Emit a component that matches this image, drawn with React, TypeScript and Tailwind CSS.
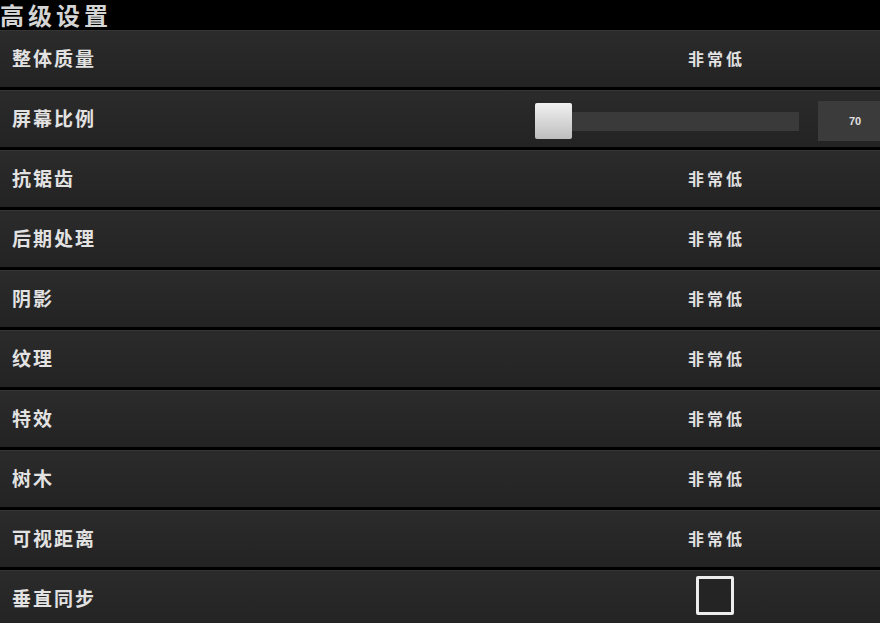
import React from "react";

const rows: { label: string; kind: "value" | "slider" | "check" }[] = [
  { label: "整体质量", kind: "value" },
  { label: "屏幕比例", kind: "slider" },
  { label: "抗锯齿", kind: "value" },
  { label: "后期处理", kind: "value" },
  { label: "阴影", kind: "value" },
  { label: "纹理", kind: "value" },
  { label: "特效", kind: "value" },
  { label: "树木", kind: "value" },
  { label: "可视距离", kind: "value" },
  { label: "垂直同步", kind: "check" },
];

const font = { fontFamily: '"Noto Sans CJK SC", "Noto Sans", sans-serif' };

export default function App() {
  return (
    <div className="w-[880px] h-[623px] bg-black overflow-hidden" style={font}>
      <div className="h-[30px] flex items-center">
        <span className="text-[24px] leading-[28px] text-[#d4d4d4] font-bold tracking-[4px]">高级设置</span>
      </div>
      <div className="flex flex-col gap-[3px]">
        {rows.map((r) => (
          <div
            key={r.label}
            className="h-[57px] shrink-0 flex items-center bg-gradient-to-b from-[#2b2b2b] to-[#232323] border-t border-[#353535] relative"
          >
            <span className="ml-[12px] -mt-[4px] text-[19px] tracking-[2px] font-bold text-[#e2e2e2] leading-none">{r.label}</span>
            {r.kind === "value" && (
              <span className="absolute left-[688px] top-[19px] text-[16px] tracking-[3px] font-bold text-[#e2e2e2] leading-none">非常低</span>
            )}
            {r.kind === "slider" && (
              <div className="absolute left-[535px] top-[10px] flex items-center">
                <div className="w-[37px] h-[36px] rounded-[2px] bg-gradient-to-b from-[#f2f2f2] to-[#bdbdbd]" />
                <div className="w-[227px] h-[19px] bg-[#3a3a3a]" />
                <div className="ml-[19px] w-[62px] h-[40px] bg-[#3b3b3b] flex items-center pl-[31px]">
                  <span className="text-[11px] text-[#e0e0e0] font-bold" style={{ fontFamily: '"Liberation Sans", sans-serif' }}>70</span>
                </div>
              </div>
            )}
            {r.kind === "check" && (
              <div className="absolute left-[696px] top-[5px] w-[38px] h-[39px] border-[3px] border-[#ececec] bg-[#242424] rounded-[2px]" />
            )}
          </div>
        ))}
      </div>
    </div>
  );
}
